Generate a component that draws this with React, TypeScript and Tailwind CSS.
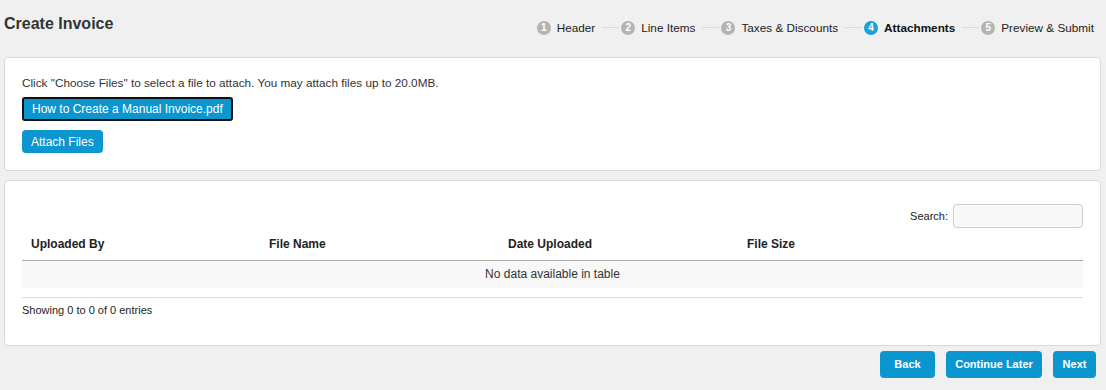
import React from 'react';

const steps = [
    { n: 1, label: 'Header' },
    { n: 2, label: 'Line Items' },
    { n: 3, label: 'Taxes & Discounts' },
    { n: 4, label: 'Attachments', active: true },
    { n: 5, label: 'Preview & Submit' },
];

function StepDot({ n, active }: { n: number; active?: boolean }) {
    return (
        <span
            className={
                'flex h-[14px] w-[14px] items-center justify-center rounded-full text-[10px] font-bold leading-none text-white ' +
                (active ? 'bg-[#17a2d9]' : 'bg-[#b4b4b4]')
            }
        >
            {n}
        </span>
    );
}

export default function App() {
    return (
        <div className="min-h-[390px] w-[1106px] bg-[#f0f0f0] px-[4px] pt-[14px] text-[#333] font-['Liberation_Sans',Arial,sans-serif]">
            <div className="flex h-[23px] items-start justify-between">
                <h1 className="text-[16px] font-bold leading-[20px] text-[#333]">Create Invoice</h1>
                <div className="mt-[5px] mr-[8px] flex items-center text-[11.75px] text-[#222]">
                    {steps.map((s, i) => (
                        <div key={s.n} className="flex items-center">
                            {i > 0 && <span className="ml-[7px] mr-[2px] h-[1px] w-[17px] bg-[#d8d8d8]" />}
                            <StepDot n={s.n} active={s.active} />
                            <span className={'ml-[6px] leading-[17px] ' + (s.active ? 'font-bold text-[#111]' : '')}>{s.label}</span>
                        </div>
                    ))}
                </div>
            </div>

            <div className="mt-[20px] mr-[1px] rounded-[4px] border border-[#d9d9d9] bg-white px-[17px] pt-[17px] pb-[17px]">
                <p className="text-[11.75px] leading-[16px] text-[#333]">
                    Click "Choose Files" to select a file to attach. You may attach files up to 20.0MB.
                </p>
                <div className="mt-[6px] flex">
                    <button className="h-[24px] rounded-[3px] border-2 border-[#111] bg-[#0b96cf] px-[8px] text-[12px] text-white">
                        How to Create a Manual Invoice.pdf
                    </button>
                </div>
                <div className="mt-[9px] flex">
                    <button className="h-[23px] rounded-[4px] bg-[#0b96cf] px-[9px] text-[12px] text-white">Attach Files</button>
                </div>
            </div>

            <div className="mt-[9px] mr-[1px] rounded-[4px] border border-[#d9d9d9] bg-white px-[17px] pt-[23px] pb-[28px]">
                <div className="flex items-center justify-end">
                    <label className="mr-[5px] text-[11px] text-[#222]">Search:</label>
                    <input className="h-[24px] w-[130px] rounded-[4px] border border-[#ccc] bg-[#f8f8f8]" />
                </div>
                <table className="mt-[1px] w-full text-left text-[12px]">
                    <thead>
                        <tr className="border-b border-[#aaa]">
                            <th className="h-[31px] w-[238px] px-[9px] font-bold text-[#222]">Uploaded By</th>
                            <th className="w-[239px] px-[9px] font-bold text-[#222]">File Name</th>
                            <th className="w-[239px] px-[9px] font-bold text-[#222]">Date Uploaded</th>
                            <th className="px-[9px] font-bold text-[#222]">File Size</th>
                        </tr>
                    </thead>
                    <tbody>
                        <tr className="border-b border-[#ddd]">
                            <td colSpan={4} className="h-[36px] pb-[9px] align-top">
                                <div className="flex h-[27px] items-center justify-center bg-[#f8f8f8] text-[#333]">
                                    No data available in table
                                </div>
                            </td>
                        </tr>
                    </tbody>
                </table>
                <p className="mt-[5px] text-[11px] leading-[14px] text-[#222]">Showing 0 to 0 of 0 entries</p>
            </div>

            <div className="mt-[5px] flex justify-end gap-[11px] pr-[6px]">
                <button className="h-[27px] w-[55px] rounded-[4px] bg-[#0b96cf] text-[11px] font-bold text-white">Back</button>
                <button className="h-[27px] w-[96px] rounded-[4px] bg-[#0b96cf] text-[11px] font-bold text-white">Continue Later</button>
                <button className="h-[27px] w-[43px] rounded-[4px] bg-[#0b96cf] text-[11px] font-bold text-white">Next</button>
            </div>
        </div>
    );
}
